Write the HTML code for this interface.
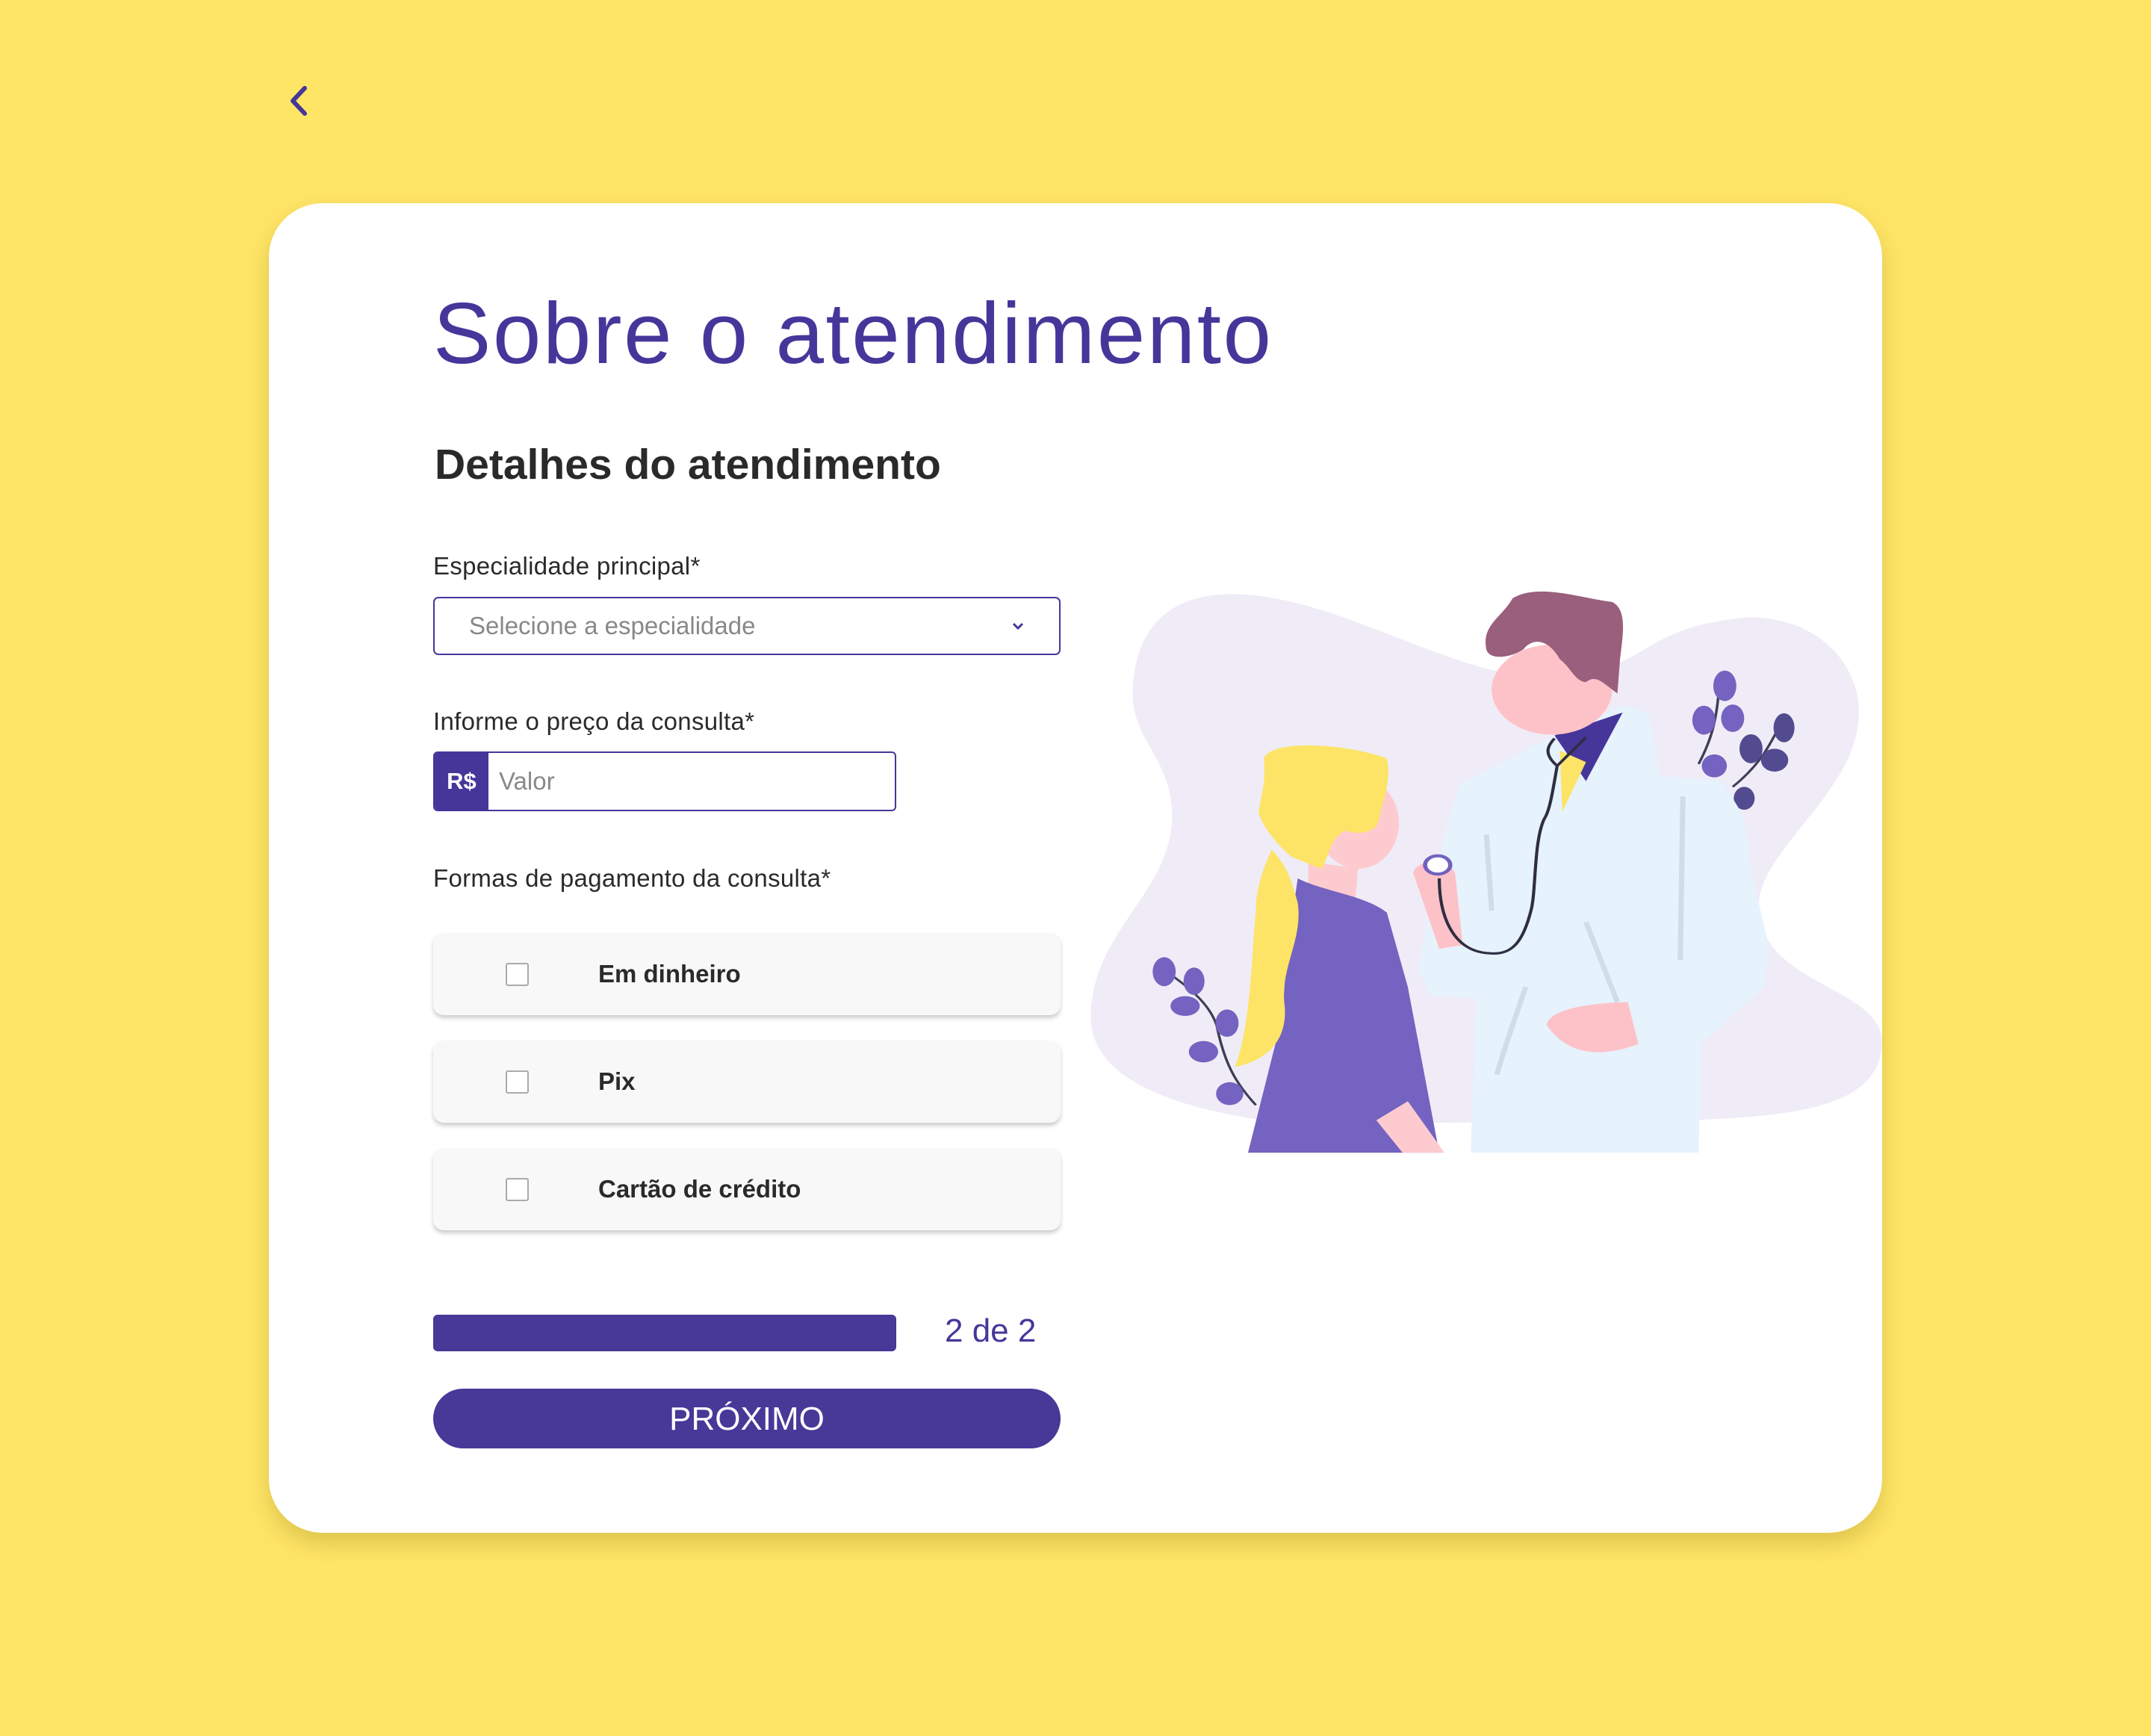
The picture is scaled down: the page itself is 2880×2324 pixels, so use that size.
<!DOCTYPE html>
<html><head><meta charset="utf-8"><style>
*{margin:0;padding:0;box-sizing:border-box}
body{width:2880px;height:2324px;background:#FFE566;position:relative;overflow:hidden;font-family:"Liberation Sans",sans-serif}
.abs{position:absolute}
.card{left:360px;top:272px;width:2160px;height:1780px;background:#fff;border-radius:72px;box-shadow:0 14px 30px rgba(120,100,0,.25)}
.title{left:580px;top:376px;font-size:116px;color:#46369A;letter-spacing:2.5px;white-space:nowrap;line-height:140px}
.h2{left:582px;top:587px;font-size:57px;font-weight:bold;color:#2a2a2a;white-space:nowrap;line-height:70px}
.lbl{left:580px;font-size:33px;color:#2a2a2a;white-space:nowrap;line-height:40px;letter-spacing:.3px}
.sel{left:580px;top:799px;width:840px;height:78px;border:2px solid #46369A;border-radius:7px;font-size:33px;color:#888;padding-left:46px;line-height:74px}
.price{left:580px;top:1006px;width:620px;height:80px;border:2px solid #46369A;border-radius:6px;overflow:hidden}
.rs{position:absolute;left:0;top:0;width:72px;height:100%;background:#46369A;color:#fff;font-weight:bold;font-size:31px;text-align:center;line-height:76px}
.val{position:absolute;left:86px;top:0;font-size:33px;color:#888;line-height:76px}
.opt{left:580px;width:840px;height:110px;background:#F8F8F8;border-radius:14px;box-shadow:0 4px 6px rgba(0,0,0,.2)}
.opt .cb{position:absolute;left:97px;top:40px;width:31px;height:31px;border:2px solid #aaa;border-radius:3px;background:#fff}
.opt .t{position:absolute;left:221px;top:0;line-height:110px;font-size:33px;font-weight:bold;color:#2a2a2a}
.bar{left:580px;top:1760px;width:620px;height:49px;background:#483898;border-radius:6px}
.step{left:1265px;top:1752px;font-size:44px;color:#46369A;line-height:60px}
.btn{left:580px;top:1859px;width:840px;height:80px;background:#483898;border-radius:40px;color:#fff;font-size:44px;text-align:center;line-height:82px}
</style></head><body>
<svg class="abs" style="left:382px;top:112px" width="36" height="46" viewBox="0 0 36 46"><path d="M26 6 L10 23 L26 40" fill="none" stroke="#46369A" stroke-width="6" stroke-linecap="round" stroke-linejoin="round"/></svg>
<div class="abs card"></div>
<div class="abs title">Sobre o atendimento</div>
<div class="abs h2">Detalhes do atendimento</div>
<div class="abs lbl" style="top:738px">Especialidade principal*</div>
<div class="abs sel">Selecione a especialidade
<svg style="position:absolute;left:770px;top:30px" width="22" height="16" viewBox="0 0 22 16"><path d="M5 4 L11 10 L17 4" fill="none" stroke="#46369A" stroke-width="3"/></svg></div>
<div class="abs lbl" style="top:946px">Informe o preço da consulta*</div>
<div class="abs price"><div class="rs">R$</div><div class="val">Valor</div></div>
<div class="abs lbl" style="top:1156px">Formas de pagamento da consulta*</div>
<div class="abs opt" style="top:1249px"><div class="cb"></div><div class="t">Em dinheiro</div></div>
<div class="abs opt" style="top:1393px"><div class="cb"></div><div class="t">Pix</div></div>
<div class="abs opt" style="top:1537px"><div class="cb"></div><div class="t">Cartão de crédito</div></div>
<div class="abs bar"></div>
<div class="abs step">2 de 2</div>
<div class="abs btn">PRÓXIMO</div>

<svg class="abs" style="left:1450px;top:760px" width="1100" height="800" viewBox="0 0 1568 1568" preserveAspectRatio="none">
<path d="M270,70 C450,60 650,240 820,280 L1000,260 C1080,230 1100,150 1270,130 C1420,130 1490,280 1480,400 C1470,600 1280,750 1290,900 C1300,1100 1530,1100 1525,1250 C1520,1420 1350,1440 1150,1450 L400,1460 C150,1420 10,1330 15,1170 C20,950 170,850 170,650 C170,500 90,450 95,320 C100,150 170,75 270,70 Z" fill="#EFECF7"/>
<g stroke="#3f3d56" stroke-width="5" fill="none"><path d="M1175,515 C1200,450 1210,400 1215,300"/><path d="M1240,575 C1290,520 1310,470 1335,400"/></g>
<g fill="#7463C0"><ellipse cx="1225" cy="310" rx="22" ry="40"/><ellipse cx="1185" cy="400" rx="22" ry="38"/><ellipse cx="1240" cy="395" rx="22" ry="36"/><ellipse cx="1205" cy="520" rx="24" ry="30"/></g>
<g fill="#524B90"><ellipse cx="1338" cy="420" rx="20" ry="38"/><ellipse cx="1275" cy="475" rx="22" ry="38"/><ellipse cx="1320" cy="505" rx="26" ry="30"/><ellipse cx="1262" cy="605" rx="20" ry="30"/></g>
<path d="M330,1410 C290,1350 270,1300 255,1200 C240,1140 200,1100 160,1060" stroke="#3f3d56" stroke-width="5" fill="none"/>
<g fill="#7463C0"><ellipse cx="155" cy="1060" rx="22" ry="38"/><ellipse cx="212" cy="1085" rx="20" ry="36"/><ellipse cx="195" cy="1150" rx="28" ry="26"/><ellipse cx="275" cy="1195" rx="22" ry="36"/><ellipse cx="230" cy="1270" rx="28" ry="28"/><ellipse cx="280" cy="1380" rx="26" ry="30"/></g>
<path d="M720,565 L900,440 L1030,360 L1080,380 L1100,545 L1220,560 L1260,650 L1280,820 L1310,1000 L1300,1100 L1180,1250 L1175,1535 L740,1535 L750,1130 L660,1120 L640,1050 L690,700 Z" fill="#E6F2FC"/>
<path d="M770,700 L780,900 M1145,600 L1140,1030 M960,930 L1020,1140 M845,1100 C820,1200 800,1280 790,1330" stroke="#CFDDE6" stroke-width="10" fill="none"/>
<path d="M900,440 L1030,380 L960,560 Z" fill="#46369A"/>
<path d="M910,480 L960,510 L915,640 Z" fill="#FDE467"/>
<ellipse cx="895" cy="320" rx="115" ry="118" fill="#FDC2C8"/>
<path d="M770,215 C760,150 800,130 820,80 C870,40 950,80 1010,90 C1040,110 1030,180 1025,240 L1020,330 C990,300 980,280 960,300 C940,300 930,260 910,240 C890,190 860,180 840,215 C810,240 775,240 770,215 Z" fill="#9A5F7D"/>
<path d="M630,800 C640,760 700,770 710,800 L725,990 L680,1000 Z" fill="#FDC2C8"/>
<path d="M885,1200 C890,1150 1000,1140 1040,1140 L1060,1250 C1000,1280 930,1290 885,1200 Z" fill="#FDC2C8"/>
<path d="M960,445 L905,520 C880,490 885,470 900,448 M905,520 C895,600 890,640 880,660 C860,720 865,850 855,900 C840,980 820,1015 780,1012 C700,1010 680,900 680,815" stroke="#2F2E41" stroke-width="6" fill="none"/>
<circle cx="677" cy="780" r="24" fill="#fff" stroke="#7262BE" stroke-width="8"/>
<path d="M430,770 L525,790 L520,870 L430,860 Z" fill="#FDCBCF"/>
<ellipse cx="525" cy="670" rx="78" ry="120" fill="#FDCBCF"/>
<path d="M410,815 C460,850 540,860 580,905 L620,1100 L680,1535 L315,1535 L380,1180 L390,1000 Z" fill="#7463C0"/>
<path d="M560,1450 L620,1400 L690,1535 L610,1535 Z" fill="#FDCBCF"/>
<path d="M345,500 C360,450 500,460 580,500 C590,560 570,620 565,660 C560,700 520,700 500,690 C470,710 470,760 455,790 L400,760 C380,740 340,680 335,640 C340,600 350,560 345,500 Z" fill="#FDE467"/>
<path d="M360,740 C340,800 330,850 330,900 C320,1050 320,1200 290,1310 C360,1290 390,1230 385,1150 C375,1050 420,980 410,880 C400,830 390,780 360,740 Z" fill="#FDE467"/>
</svg>
</body></html>
